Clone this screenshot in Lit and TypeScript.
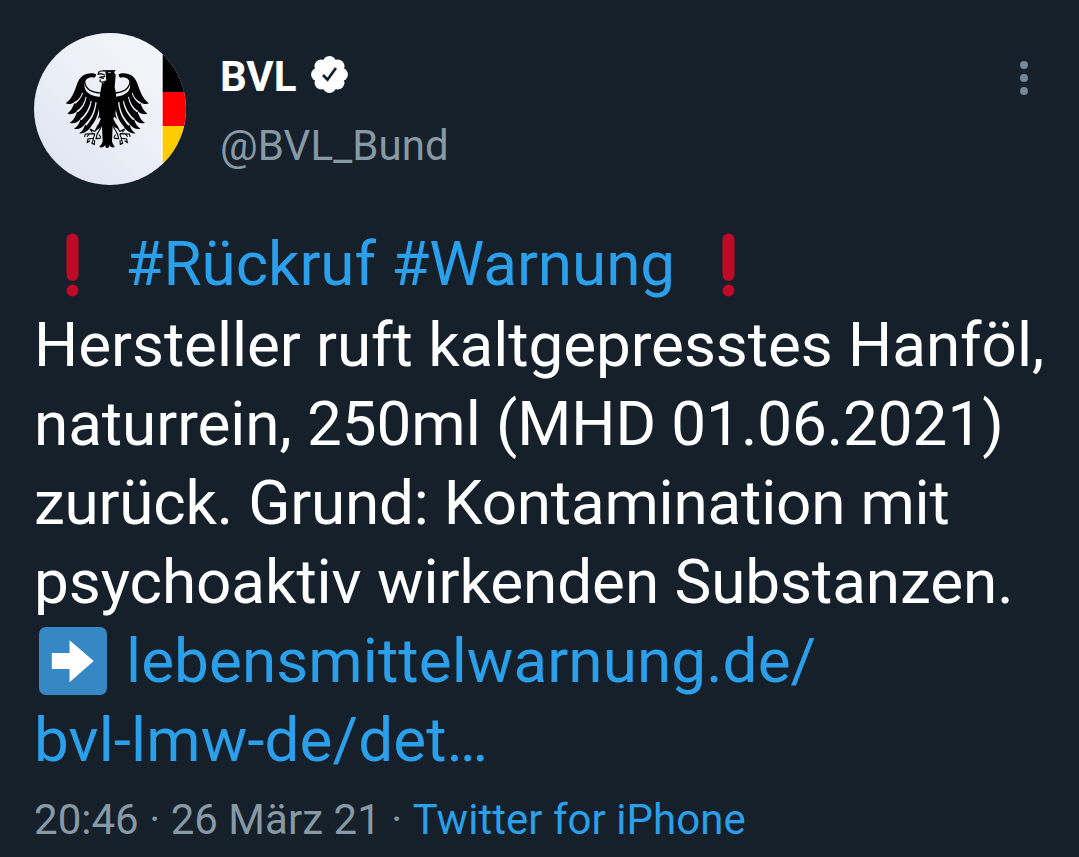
import { LitElement, html, css, svg } from "lit";
import { customElement } from "lit/decorators.js";

const wing = svg`
  <path d="M216 151 C208 145 190 147 178 154 C160 166 158 188 150 205 C144 220 134 232 125 238
    C134 242 144 240 152 234 C147 250 140 262 130 269 C141 273 152 268 160 260
    C156 276 148 290 137 296 C148 300 160 296 170 284 C167 298 160 308 150 314
    C162 318 174 312 184 299 C181 312 175 322 165 328 C178 330 192 322 202 306
    L222 284 L232 276 L238 224
    C222 228 204 224 193 212 C181 199 178 180 186 168 C191 161 202 158 209 161 C213 161 216 158 216 151Z"/>
  <path d="M181 172 C181 193 194 208 230 210 L236 204 L236 228 L220 228 Q184 214 181 172Z" fill="#eef1f8"/>
  <path d="M182 172 C184 192 198 206 232 207" fill="none" stroke="#000" stroke-width="3.5"/>
  <path d="M178 178 C179 204 200 219 236 219 L236 240 L196 232 L174 205Z"/>
  <g fill="#eceff7">
    <path d="M174 206 C170 220 162 229 149 235 L153 240 C165 232 173 220 177 207Z"/>
    <path d="M185 218 C181 238 172 251 157 261 L162 265 C176 254 185 238 188 219Z"/>
    <path d="M200 230 C195 254 184 271 168 285 L172 289 C188 275 200 256 203 231Z"/>
    <path d="M214 234 C211 262 201 283 182 301 L187 305 C205 286 215 264 218 235Z"/>
    <path d="M226 244 C224 268 217 289 201 308 L206 312 C221 293 228 268 229 245Z"/>
  </g>`;

const claw = svg`
  <path d="M222 304 L213 322 M231 310 L221 328 M211 322 L198 315 L204 324 M211 329 L184 330 L182 337 M190 337 L194 332
    M212 332 L208 343 L192 345 L190 355 L197 351 M220 328 L216 344 L228 343 M208 345 L204 358 L211 361 L212 350 M226 333 L230 340"
    fill="none" stroke="#000" stroke-width="3.3" stroke-linecap="square"/>`;

@customElement("tweet-avatar")
class TweetAvatar extends LitElement {
  static styles = css`
    :host { display: block; width: 152px; height: 152px; flex: none; }
    svg { display: block; width: 100%; height: 100%; }
  `;
  render() {
    return html`<svg viewBox="30 27 456 456" aria-label="BVL">
      <defs>
        <clipPath id="disc"><circle cx="258" cy="255" r="228" /></clipPath>
        <linearGradient id="paper" x1="1" y1="0" x2="0" y2="1">
          <stop offset="0" stop-color="#f5f7fd" />
          <stop offset=".5" stop-color="#eceff7" />
          <stop offset="1" stop-color="#dde3f0" />
        </linearGradient>
      </defs>
      <g clip-path="url(#disc)">
        <rect x="30" y="27" width="456" height="456" fill="url(#paper)" />
        <rect x="412" y="27" width="4" height="456" fill="#fff" />
        <rect x="416" y="27" width="70" height="178" fill="#000" />
        <rect x="416" y="204" width="70" height="102" fill="#f00" />
        <rect x="416" y="306" width="70" height="177" fill="#fc0" />
      </g>
      ${wing}
      <g transform="matrix(-1 0 0 1 500 0)">${wing}</g>
      ${claw}
      <g transform="matrix(-1 0 0 1 500 0)">${claw}</g>
      <path d="M236 139 L275 138 L270 145 L275 152 L272 190 C276 205 278 222 277 240 C277 262 272 276 268 284
        L284 316 L266 307 L264 352 C266 362 272 366 272 369 C266 372 259 369 256 362 C257 368 254 371 250 372
        C245 371 243 368 244 362 C240 369 233 372 226 369 C227 366 234 362 236 352 L234 307 L214 322 L230 286
        C225 274 224 254 226 238 C226 218 230 200 234 178 L240 170 L246 158 L243 147Z"/>
      <path d="M223 142 L244 142 L247 170 L238 177 L225 172Z" fill="#eef1f8"/>
      <path d="M244 141 L230 141 Q223 143 222 151 L231 149 L243 153 M244 157 L226 160 L240 163 M229 166 L228 172 Q236 178 247 170"
        fill="none" stroke="#000" stroke-width="3.4"/>
      <path d="M252 146 L261 145" stroke="#fff" stroke-width="2"/>
    </svg>`;
  }
}

@customElement("app-root")
class AppRoot extends LitElement {
  static styles = css`
    :host {
      display: block; box-sizing: border-box; width: 1079px; height: 857px;
      padding: 33px 34px 0 34px; overflow: hidden; background: #16202a;
      color: #fff; font-family: Roboto, sans-serif;
    }
    .head { display: flex; height: 152px; }
    .who { display: flex; flex-direction: column; margin-left: 34px; padding-top: 9px; flex: 1; }
    .name { display: flex; align-items: center; height: 69px; font-size: 42px; font-weight: 700; line-height: 69px; }
    .badge { width: 37px; height: 37px; margin: -4px 0 0 14.500px; }
    .handle { font-size: 42px; line-height: 70px; color: #8899a6; letter-spacing: .1px; }
    .more { width: 10px; height: 36px; margin: 27px 16px 0 0; }
    .body { margin-top: 39px; font-size: 62px; }
    .line { display: flex; height: 79px; line-height: 79px; white-space: pre; letter-spacing: -.06px; }
    .first { height: 81px; letter-spacing: -.07px; }
    .reason { letter-spacing: -.2px; }
    .tail { letter-spacing: .08px; }
    .link { color: #2b9fe9; }
    .bang { width: 76px; height: 80px; flex: none; margin-top: 1px; }
    .arrow { width: 68px; height: 68px; margin: 6px 19.500px 0 4.500px; flex: none; }
    .meta { display: flex; margin-top: 13px; font-size: 42px; line-height: 56px; color: #8899a6; white-space: pre; letter-spacing: .03px; }
  `;
  bang() {
    return html`<svg class="bang" viewBox="0 0 76 80" fill="#be0a26">
      <rect x="32.500" y="8.500" width="12" height="47.500" rx="6" /><circle cx="38.500" cy="65.500" r="6" />
    </svg>`;
  }
  render() {
    const petals = [0, 45, 90, 135, 180, 225, 270, 315];
    return html`
      <div class="head">
        <tweet-avatar></tweet-avatar>
        <div class="who">
          <div class="name"><span>BVL</span>
            <svg class="badge" viewBox="-18.500 -18.500 37 37" fill="#fff">
              <circle r="15" />
              ${petals.map((a) => svg`<circle cx="0" cy="-11.600" r="6.800" transform="rotate(${a})" />`)}
              <path d="M-6.500 .6 L-2 5.200 L6.400 -6.500" fill="none" stroke="#17202a" stroke-width="2.800" />
            </svg>
          </div>
          <div class="handle">@BVL_Bund</div>
        </div>
        <svg class="more" viewBox="0 0 10 36" fill="#74869a">
          <circle cx="5" cy="5" r="4" /><circle cx="5" cy="18" r="4" /><circle cx="5" cy="31" r="4" />
        </svg>
      </div>
      <div class="body">
        <div class="line first">${this.bang()}<span class="link"> #Rückruf #Warnung </span>${this.bang()}</div>
        <div class="line"><span>Hersteller ruft kaltgepresstes Hanföl,</span></div>
        <div class="line"><span>naturrein, 250ml (MHD 01.06.2021)</span></div>
        <div class="line reason"><span>zurück. Grund: Kontamination mit</span></div>
        <div class="line"><span>psychoaktiv wirkenden Substanzen.</span></div>
        <div class="line tail"><svg class="arrow" viewBox="0 0 69 69">
            <rect width="69" height="69" rx="7" fill="#3688c4" />
            <path d="M13 26.500 H31 V13.500 L55.500 34.500 L31 56 V42.500 H13Z" fill="#fff" />
          </svg><span class="link">lebensmittelwarnung.de/</span></div>
        <div class="line tail"><span class="link">bvl-lmw-de/det…</span></div>
      </div>
      <div class="meta"><span>20:46 · 26 März 21 · </span><span class="link">Twitter for iPhone</span></div>
    `;
  }
}
